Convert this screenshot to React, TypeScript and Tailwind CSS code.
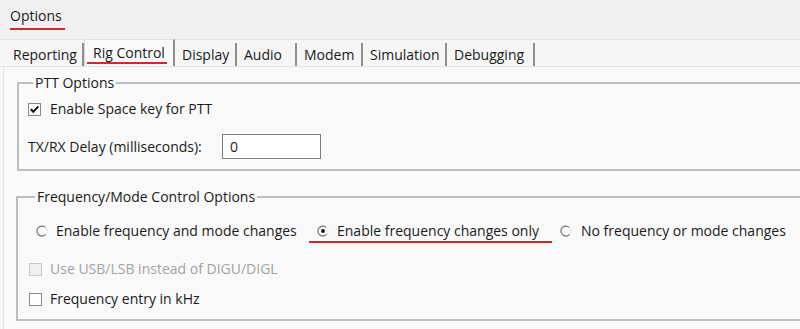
import React from "react";

const FONT = { fontFamily: '"Segoe UI", "Open Sans", "Noto Sans", sans-serif' };

function Radio({ checked }: { checked?: boolean }) {
  return (
    <svg width="12" height="12" viewBox="0 0 12 12" className="shrink-0">
      <circle cx="6" cy="6" r="5" fill="#fafafa" stroke="#e2e2e2" strokeWidth="1" />
      <path d="M9.3 2.4 A5 5 0 1 0 9.6 9.4" fill="none" stroke="#7a7a7a" strokeWidth="1.2" />
      {checked && <circle cx="6" cy="6" r="1.9" fill="#111" />}
    </svg>
  );
}

function Check({ checked, disabled }: { checked?: boolean; disabled?: boolean }) {
  return (
    <span
      className={
        "w-[13px] h-[13px] shrink-0 border flex items-center justify-center " +
        (disabled ? "border-[#c6c6c6] bg-[#f0f0f0]" : "border-[#8a8a8a] bg-[#fdfdfd]")
      }
    >
      {checked && (
        <svg width="11" height="11" viewBox="0 0 11 11">
          <path d="M1.8 5.2 L4.3 7.8 L9.3 2.3" fill="none" stroke="#111" strokeWidth="2" />
        </svg>
      )}
    </span>
  );
}

const tabs = [
  { label: "Reporting", w: "w-[78px]" },
  { label: "Rig Control", w: "w-[91px]", active: true },
  { label: "Display", w: "w-[62px]" },
  { label: "Audio", w: "w-[60px]" },
  { label: "Modem", w: "w-[66px]" },
  { label: "Simulation", w: "w-[84px]" },
  { label: "Debugging", w: "w-[88px]" },
];

export default function App() {
  return (
    <div className="w-[800px] h-[329px] overflow-hidden bg-[#f9f9f9] text-[14px] text-[#1a1a1a] leading-[16px]" style={FONT}>
      {/* title */}
      <div className="h-[39px] bg-[#f0f0f0] pl-[10px] pt-[8px]">
        <span className="relative inline-block">
          Options
          <span className="absolute left-0 right-[-3px] top-[20px] h-[2px] bg-[#d4262c]" />
        </span>
      </div>
      {/* tabs */}
      <div className="h-[28px] bg-[#f6f6f6] border-t border-[#e6e6e6] border-b border-b-[#e2e2e2] flex items-end pl-[6px]">
        {tabs.map((t) => (
          <div
            key={t.label}
            className={
              t.w +
              " flex items-center border-r-2 border-r-[#8f8f8f] " +
              (t.active
                ? "h-[27px] pl-[8px] border-l border-l-[#d6d6d6] border-t border-t-[#e0e0e0] bg-[#f9f9f9]"
                : "h-[23px] pl-[7px]")
            }
          >
            <span className="relative">
              {t.label}
              {t.active && <span className="absolute left-[-6px] right-[-2px] top-[17px] h-[2px] bg-[#d4262c]" />}
            </span>
          </div>
        ))}
      </div>
      {/* page */}
      <div className="ml-[3px] border-l border-[#e4e4e4] h-[262px] pt-[8px]">
        <fieldset className="ml-[13px] w-[820px] border-2 border-[#bdbdbd] pl-[9px] pb-[10px]">
          <legend className="ml-[5px] px-[2px] leading-[16px]">PTT Options</legend>
          <div className="h-[20px] mt-[8px] flex items-center gap-[9px]">
            <Check checked />
            <span>Enable Space key for PTT</span>
          </div>
          <div className="mt-[15px] flex items-center">
            <span className="w-[194px]">TX/RX Delay (milliseconds):</span>
            <div className="w-[99px] h-[25px] border border-[#7d7d7d] bg-white flex items-center pl-[7px]">0</div>
          </div>
        </fieldset>
        <fieldset className="mt-[18px] ml-[12px] w-[820px] border-2 border-[#bdbdbd] pl-[11px] pb-[10px]">
          <legend className="ml-[6px] px-[2px] leading-[16px]">Frequency/Mode Control Options</legend>
          <div className="h-[20px] mt-[16px] flex items-center">
            <div className="w-[280px] pl-[7px] flex items-center gap-[8px]">
              <Radio />
              <span>Enable frequency and mode changes</span>
            </div>
            <div className="relative w-[251px] flex items-center gap-[8px] pl-[8px]">
              <Radio checked />
              <span>Enable frequency changes only</span>
              <span className="absolute left-0 w-[243px] top-[18px] h-[2px] bg-[#d4262c]" />
            </div>
            <div className="flex items-center gap-[9px]">
              <Radio />
              <span>No frequency or mode changes</span>
            </div>
          </div>
          <div className="h-[20px] mt-[18px] flex items-center gap-[8px] text-[#a3a3a3]">
            <Check disabled />
            <span>Use USB/LSB instead of DIGU/DIGL</span>
          </div>
          <div className="h-[20px] mt-[10px] flex items-center gap-[8px]">
            <Check />
            <span>Frequency entry in kHz</span>
          </div>
        </fieldset>
      </div>
    </div>
  );
}
